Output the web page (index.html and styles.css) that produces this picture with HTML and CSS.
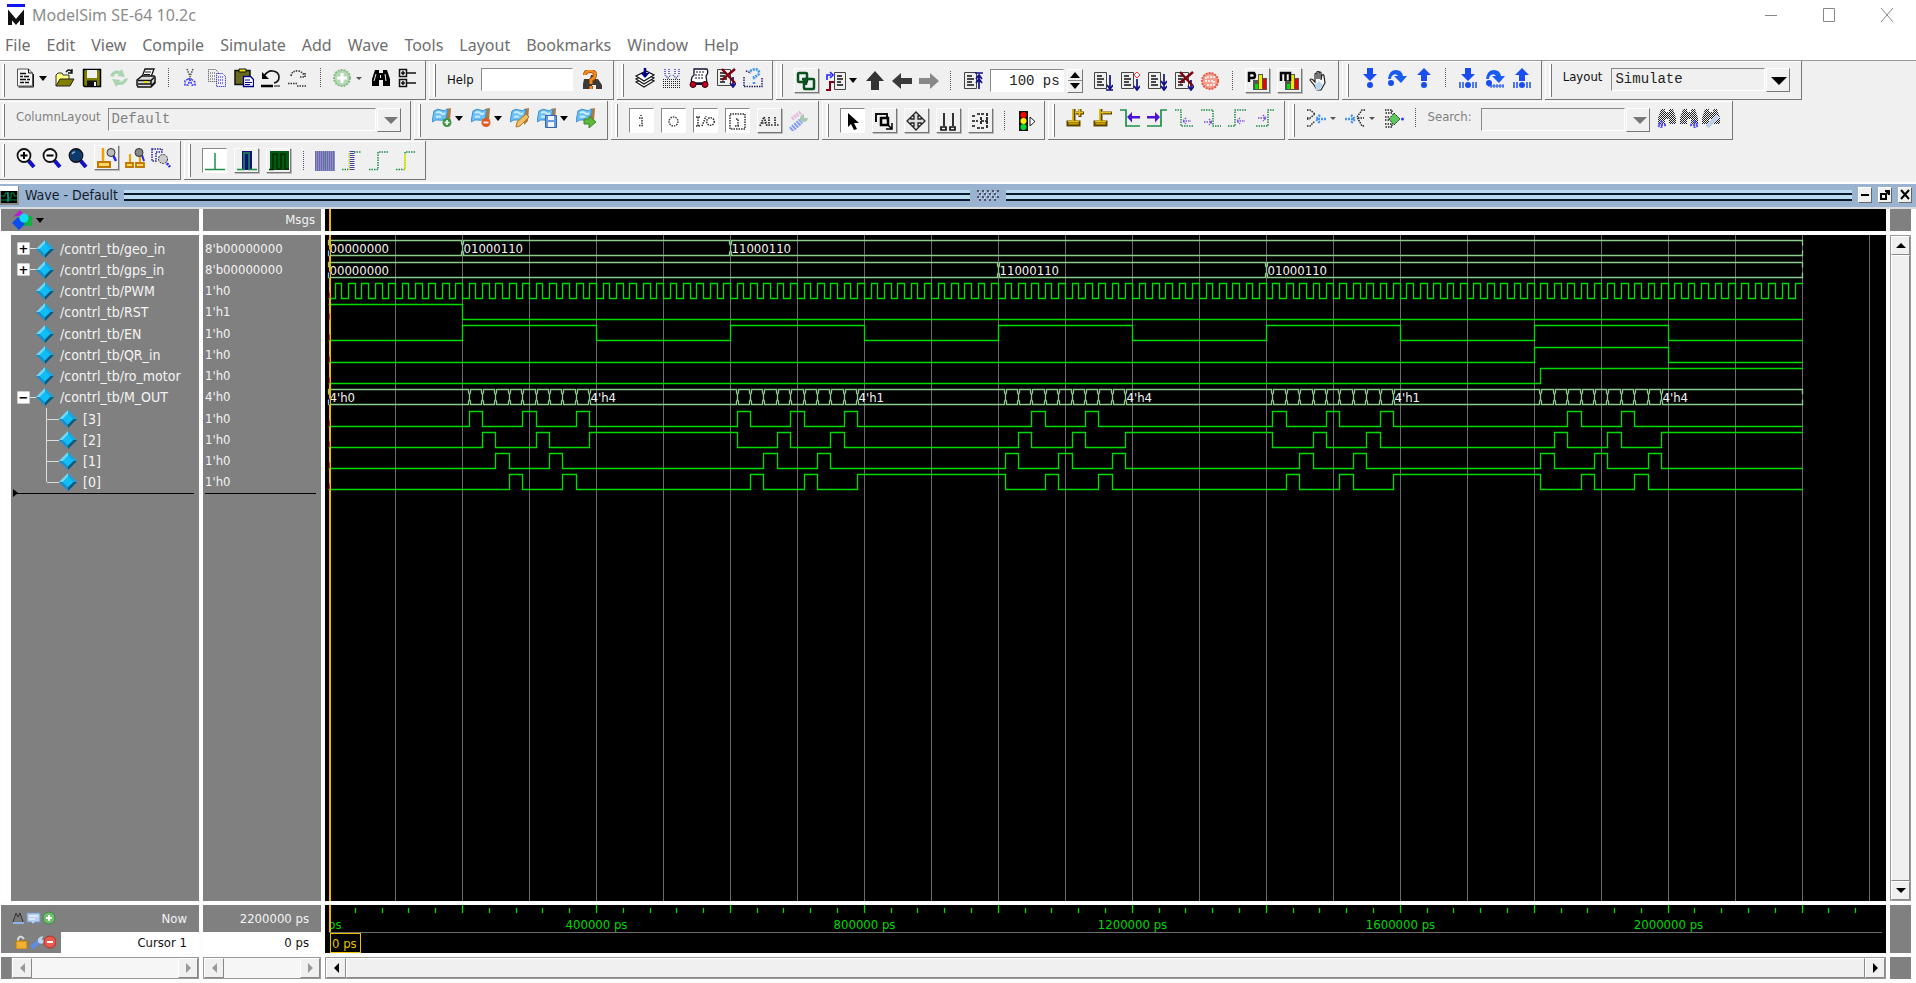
FILE: index.html
```html
<!DOCTYPE html>
<html lang="en">
<head>
<meta charset="utf-8">
<title>ModelSim SE-64 10.2c</title>
<link rel="stylesheet" href="styles.css">
</head>
<body>
<svg class="sprite" aria-hidden="true">
  <symbol id="i-doc" viewBox="0 0 20 20"><path d="M1.500 1h11l4 4v13h-15z" fill="#f4f4f4" stroke="#555"/><path d="M12.500 1v4h4M17.500 6v13h-15" fill="none" stroke="#111"/><path d="M4 5.500h6M4 8.500h3M8 8.500h5M4 11.500h6M11 11.500h3M4 14.500h4M9 14.500h4" stroke="#111" stroke-width="1.500"/></symbol>
  <symbol id="i-open" viewBox="0 0 20 20"><path d="M1 18V7l2-2h4l1 2h6v4" fill="#ffff80" stroke="#333"/><path d="M1 18l4-7h14l-4 7z" fill="#808000" stroke="#222"/><path d="M11 4q3-4 6 0M17 1v4h-4" fill="none" stroke="#111" stroke-width="1.400"/></symbol>
  <symbol id="i-save" viewBox="0 0 20 20"><path d="M1.500 1.500h17v17h-16l-1-1z" fill="#808000" stroke="#000" stroke-width="1.500"/><path d="M5 2h10v8H5z" fill="#f0f0f0"/><path d="M5 12.500h10V18H5z" fill="#111"/><path d="M12 14h2v4h-2z" fill="#eee"/></symbol>
  <symbol id="i-refresh" viewBox="0 0 20 20"><g fill="#a9d6b0"><path d="M1 8q3-7 10-5l2-2 3 8-8-1 2-2q-5-1-5 3z"/><path d="M19 10q-2 8-10 7l-2 2-4-8 9 1-2 2q4 0 5-3z"/></g></symbol>
  <symbol id="i-print" viewBox="0 0 20 20"><path d="M6 9l3-8h9l-3 8z" fill="#fff" stroke="#111" stroke-width="1.300"/><path d="M9 4h6M8 6.500h6" stroke="#111"/><path d="M1 12l5-4h12l1 1v6l-4 4H2l-1-2z" fill="#ddd" stroke="#111" stroke-width="1.500"/><path d="M2 12.500h13l3-3M2 16h13v-3M15 18l4-4" fill="none" stroke="#111" stroke-width="1.500"/><path d="M8 14h4" stroke="#e8e000" stroke-width="2"/></symbol>
  <symbol id="i-cut" viewBox="0 0 20 20"><path d="M7 1l4 10M13 1l-4 10" stroke="#555" stroke-width="1.500" stroke-dasharray="1.500 1" fill="none"/><path d="M8 11l-3 2v4h3l2-5 2 5h3v-3l-4-3z" fill="none" stroke="#33f" stroke-width="1.500" stroke-dasharray="2 1"/></symbol>
  <symbol id="i-copy" viewBox="0 0 20 20"><path d="M1.500 1.500h7l3 3v9h-10zM3 5h5M3 8h5M3 11h5" fill="none" stroke="#444" stroke-dasharray="1 1"/><path d="M9.500 5.500h6l3 3v10h-9z" fill="#eef" stroke="#119" stroke-dasharray="1 1"/><path d="M11 9h6M11 12h6M11 15h6" stroke="#119" stroke-dasharray="1 1"/></symbol>
  <symbol id="i-paste" viewBox="0 0 20 20"><path d="M1 2.500h15v14H1z" fill="#6b6a1c" stroke="#111" stroke-width="1.500"/><path d="M5 1h7v3H5z" fill="#e8e000" stroke="#111"/><path d="M9.500 8.500h7l3 3v7h-10z" fill="#fff" stroke="#008" stroke-width="1.300"/><path d="M11 12h5M11 14.500h7M11 16.500h5" stroke="#008"/></symbol>
  <symbol id="i-undo" viewBox="0 0 20 20"><path d="M3 8q4-6 9-5 6 1 6 6 0 5-5 6" fill="none" stroke="#111" stroke-width="1.600"/><path d="M1 4v7h7z"/><path d="M0 18h12" stroke="#000" stroke-width="2.500"/><path d="M13 18h6" stroke="#111"/></symbol>
  <symbol id="i-redo" viewBox="0 0 20 20"><path d="M3 8q1-6 8-5 3 1 5 4M12 9h5V4" fill="none" stroke="#333" stroke-width="1.600" stroke-dasharray="1.500 1"/><path d="M0 15.500h10M9 18h10" stroke="#333" stroke-width="1.500" stroke-dasharray="1.500 1"/></symbol>
  <symbol id="i-add" viewBox="0 0 20 20"><circle cx="10" cy="10" r="8" fill="#b4dab4" stroke="#8ab68a" stroke-width="2" stroke-dasharray="2 1"/><path d="M10 5v10M5 10h10" stroke="#fff" stroke-width="3"/></symbol>
  <symbol id="i-binoc" viewBox="0 0 20 20"><path d="M4 2h4v3h4V2h4l3 9v7h-7v-6H8v6H1v-7z"/><path d="M5 6l-2 7M14 6l1 7M9.500 7v3" stroke="#eee" stroke-width="1"/></symbol>
  <symbol id="i-tree" viewBox="0 0 20 20"><g fill="none" stroke="#111" stroke-width="1.500"><path d="M1.500 1.500h7v7h-7zM1.500 11.500h7v7h-7zM9 5h9M9 15h9M3 5h4M5 3v4M3 15h4M5 13v4"/></g></symbol>
  <symbol id="i-helpfind" viewBox="0 0 20 20"><path d="M2 9h6l1-4h3l1 4h3l4 6v4h-6v-4h-4v4H1v-5z" fill="#3a3a3a"/><path d="M3 5q0-4 5-4 5 0 5 4 0 3-4 5v4M9 16v3" fill="none" stroke="#a04800" stroke-width="4"/><path d="M3 5q0-4 5-4 5 0 5 4 0 3-4 5v4M9 16v3" fill="none" stroke="#f58a1c" stroke-width="2.500"/></symbol>
  <symbol id="i-layers" viewBox="0 0 20 20"><g fill="#fff" stroke="#111" stroke-width="1.200"><path d="M1 14l10-5 8 4-10 6z"/><path d="M1 11l10-5 8 4-10 6z"/><path d="M1 8l10-5 8 4-10 6z"/></g><path d="M10 0v6" stroke="#008" stroke-width="2.500"/><path d="M5.500 5h9L10 10z" fill="#008"/></symbol>
  <symbol id="i-compall" viewBox="0 0 20 20"><path d="M3 1v5M7 1v5M13 1v5M17 1v5M3 7l3 3 3-3M11 7l3 3 3-3" fill="none" stroke="#44b" stroke-width="1.500" stroke-dasharray="1 1"/><path d="M1 11.500h18M1 13.500h18M1 15.500h18M1 17.500h18M1 19.500h18" stroke="#222" stroke-dasharray="1 1"/></symbol>
  <symbol id="i-sim" viewBox="0 0 20 20"><path d="M5 1h13q2 4-1 7l1 7H3q-2-5 2-8z" fill="#fff" stroke="#113" stroke-width="1.300"/><path d="M7 4h9M6 7h9M6 10h9" stroke="#113" stroke-dasharray="2 1"/><circle cx="4" cy="16.500" r="3" fill="#c00020" stroke="#300"/><circle cx="16" cy="16.500" r="3" fill="#c00020" stroke="#300"/><path d="M7 16h6" stroke="#113" stroke-width="2"/></symbol>
  <symbol id="i-break" viewBox="0 0 20 20"><path d="M1.500 1.500h13v16h-13z" fill="#eee" stroke="#444"/><path d="M4 5h6M4 8h5M4 11h7M4 14h5" stroke="#111" stroke-width="1.600"/><path d="M17 9v9M14 15l3 4 3-4" fill="none" stroke="#118" stroke-width="1.700"/><path d="M6 1l13 14M19 1L6 12" stroke="#7c0010" stroke-width="2.400"/></symbol>
  <symbol id="i-ask" viewBox="0 0 20 20"><path d="M1 18.500h18V9M1 18V8M3 3l5 2" fill="none" stroke="#226" stroke-width="1.500" stroke-dasharray="1.500 1"/><path d="M7 3q7-4 9 1 1 3-5 5v3M11 14v2" fill="none" stroke="#3b95e8" stroke-width="2.500" stroke-dasharray="2 1"/></symbol>
  <symbol id="i-link" viewBox="0 0 20 20"><g fill="none" stroke="#0a5020" stroke-width="2.500"><rect x="2" y="2" width="9" height="9" rx="1"/><rect x="8" y="8" width="10" height="10" rx="1"/><path d="M6 8h4v6"/></g></symbol>
  <symbol id="i-restart" viewBox="0 0 20 20"><path d="M8.500 1.500h11v17h-11z" fill="#eee" stroke="#444"/><path d="M11 5h5M11 8h6M11 11h4M11 14h6" stroke="#111" stroke-width="1.500"/><path d="M1 9V4h4M4 1l3 3-3 3" fill="none" stroke="#22f" stroke-width="1.600"/><path d="M0 19h4v-8h4" fill="none" stroke="#8b0010" stroke-width="2"/></symbol>
  <symbol id="i-up" viewBox="0 0 20 20"><path d="M10 0l9 10h-5v9H6v-9H1z" fill="#333"/></symbol>
  <symbol id="i-left" viewBox="0 0 20 20"><path d="M0 10l9-8v5h11v6H9v5z" fill="#3a3a3a"/></symbol>
  <symbol id="i-right" viewBox="0 0 20 20"><path d="M20 10l-9-8v5H0v6h11v5z" fill="#888"/></symbol>
  <symbol id="i-step" viewBox="0 0 20 20"><path d="M1.500 1.500h12v16h-12z" fill="#eee" stroke="#444"/><path d="M4 5h5M4 8h7M4 11h5M4 14h7" stroke="#111" stroke-width="1.500"/></symbol>
  <symbol id="i-runlen" viewBox="0 0 20 20"><use href="#i-step"/><path d="M12 2h8M16 18V4M13 8l3-4 3 4M13 12l3-4 3 4" fill="none" stroke="#118" stroke-width="1.700"/></symbol>
  <symbol id="i-run" viewBox="0 0 20 20"><use href="#i-step"/><path d="M17 4v13M14 14l3 4 3-4M13 19h7" fill="none" stroke="#118" stroke-width="1.700"/></symbol>
  <symbol id="i-cont" viewBox="0 0 20 20"><use href="#i-step"/><path d="M17 8v10M14 15l3 4 3-4" fill="none" stroke="#118" stroke-width="1.700"/><path d="M17 1l3 3-3 3-3-3z" fill="#fff" stroke="#f33"/></symbol>
  <symbol id="i-runall" viewBox="0 0 20 20"><use href="#i-step"/><path d="M17 3v15M14 10l3 4 3-4M14 15l3 4 3-4" fill="none" stroke="#118" stroke-width="1.700"/></symbol>
  <symbol id="i-stop" viewBox="0 0 20 20"><circle cx="9" cy="10" r="8" fill="#f2a091" stroke="#e85640" stroke-width="2" stroke-dasharray="2 1"/><path d="M6 6h8M5 6v4h8v4H5" fill="none" stroke="#fff" stroke-dasharray="2 1" stroke-width="1.500"/></symbol>
  <symbol id="i-bars" viewBox="0 0 20 20"><path d="M6 9h5V3h5v4h4v12H6z" fill="#555"/><path d="M8 13h3v5H8z" fill="#0d0"/><path d="M12 4h3v14h-3z" fill="#ee0"/><path d="M16 8h3v10h-3z" fill="#e00"/></symbol>
  <symbol id="i-prof" viewBox="0 0 20 20"><use href="#i-bars"/><path d="M2 11V2h5q2 3 0 5H3" fill="none" stroke="#000" stroke-width="2.500"/></symbol>
  <symbol id="i-mem" viewBox="0 0 20 20"><use href="#i-bars"/><path d="M2 10V2h9v8M6.500 2v8" fill="none" stroke="#000" stroke-width="2.500"/></symbol>
  <symbol id="i-hand" viewBox="0 0 20 20"><path d="M5 14L1 9q1-2 3 0l2 2V3q2-2 2 0v5-7q2-2 2 0v7-6q2-2 2 0v7l1-5q2-1 2 1l1 7-4 7H8z" fill="#f8f8f8" stroke="#222" stroke-width="1.200"/><path d="M6 14l4-4 4 4-4 5H7z" fill="#bcd6f0"/></symbol>
  <symbol id="i-into" viewBox="0 0 20 20"><path d="M7 0h6v6h4l-7 7-7-7h4z" fill="#1a4df0"/><circle cx="10" cy="17" r="3" fill="#1a4df0"/></symbol>
  <symbol id="i-over" viewBox="0 0 20 20"><path d="M1 11q1-9 8-9 6 0 7 6h4l-6 7-7-7h4q-2-3-5-1-2 1-2 4z" fill="#1a5cf0"/><circle cx="4" cy="15" r="3" fill="#1a4df0"/></symbol>
  <symbol id="i-out" viewBox="0 0 20 20"><path d="M7 13h6V7h4l-7-7-7 7h4z" fill="#1a4df0"/><circle cx="10" cy="17" r="3" fill="#1a4df0"/></symbol>
  <symbol id="i-ticks" viewBox="0 0 20 20"><path d="M2 14v6M5 14v6M15 14v6M18 14v6" stroke="#1a4df0" stroke-width="1.500"/></symbol>
  <symbol id="i-intoc" viewBox="0 0 20 20"><use href="#i-ticks"/><use href="#i-into"/></symbol>
  <symbol id="i-overc" viewBox="0 0 20 20"><path d="M3 18h16M6 16v4M9 16v4M12 16v4M15 16v4M18 16v4" stroke="#1a4df0"/><use href="#i-over"/></symbol>
  <symbol id="i-outc" viewBox="0 0 20 20"><use href="#i-ticks"/><use href="#i-out"/></symbol>
  <symbol id="i-flag" viewBox="0 0 20 20"><path d="M14 1l5-1-1 13-4 4z" fill="#b07a3c"/><path d="M2 3q4-3 7-1t7-1l-2 10q-4 2-7 1t-7 2z" fill="#6cc0f6" stroke="#3a8ed0"/><path d="M4 5q3-2 5 0t4 0M4 9q3-1 5 0" stroke="#c8ecff" stroke-width="2" fill="none"/></symbol>
  <symbol id="i-flagadd" viewBox="0 0 20 20"><use href="#i-flag"/><circle cx="15" cy="14.500" r="4.500" fill="#3f9440"/><path d="M15 12v5M12.500 14.500h5" stroke="#fff" stroke-width="1.600"/></symbol>
  <symbol id="i-flagdel" viewBox="0 0 20 20"><use href="#i-flag"/><circle cx="15" cy="14.500" r="4.500" fill="#e2581e"/><path d="M12.500 14.500h5" stroke="#fff" stroke-width="1.800"/></symbol>
  <symbol id="i-flagedit" viewBox="0 0 20 20"><use href="#i-flag"/><path d="M6 19l1-5 9-8 3 3-9 9z" fill="#f0c060" stroke="#a97a28"/></symbol>
  <symbol id="i-flagsave" viewBox="0 0 20 20"><use href="#i-flag"/><path d="M8.500 7.500h11v12h-11z" fill="#6a9ae0" stroke="#3562b0"/><path d="M11 8h6v4h-6zM11 14h6v5h-6z" fill="#eef5ff"/></symbol>
  <symbol id="i-flaggo" viewBox="0 0 20 20"><use href="#i-flag"/><path d="M8 11h5V8l7 6-7 6v-4H8z" fill="#5fb83c" stroke="#3c8a22"/></symbol>
  <symbol id="i-in" viewBox="0 0 20 20"><path d="M8 7h3v7M8 14.500h5M10 4v1" fill="none" stroke="#333" stroke-width="1.500" stroke-dasharray="1.500 1"/></symbol>
  <symbol id="i-o" viewBox="0 0 20 20"><circle cx="10.500" cy="10.500" r="4.500" fill="none" stroke="#444" stroke-width="1.500" stroke-dasharray="1.500 1"/></symbol>
  <symbol id="i-io" viewBox="0 0 20 20"><path d="M1 6h4M3 6v9M1 15h4M7 15l4-10" fill="none" stroke="#333" stroke-width="1.500" stroke-dasharray="1.500 1"/><circle cx="15.500" cy="10.500" r="3.800" fill="none" stroke="#333" stroke-width="1.500" stroke-dasharray="1.500 1"/></symbol>
  <symbol id="i-int" viewBox="0 0 20 20"><path d="M3 3h15v15H3zM9 8h2v7M8 15h5" fill="none" stroke="#333" stroke-width="1.500" stroke-dasharray="1.500 1"/></symbol>
  <symbol id="i-all" viewBox="0 0 20 20"><path d="M1 15l4-9 3 9M3 12h4M10 6v8h4M16 6v8h4" fill="none" stroke="#222" stroke-width="1.700" stroke-dasharray="1.500 1"/></symbol>
  <symbol id="i-wrench" viewBox="0 0 20 20"><path d="M2 19l10-9" stroke="#7f9cf0" stroke-width="6" stroke-dasharray="2 1"/><path d="M11 10q-1-6 4-7v4h4q-1 6-8 3" fill="#a8c8b4"/><path d="M3 8l9-7" stroke="#e3b8d8" stroke-width="4" stroke-dasharray="2 1"/></symbol>
  <symbol id="i-pointer" viewBox="0 0 20 20"><path d="M6 2v14l3-3 3 6 3-1-3-6h5z"/></symbol>
  <symbol id="i-zoommode" viewBox="0 0 20 20"><path d="M2 11V3h11v3" fill="none" stroke="#111" stroke-width="2"/><rect x="7" y="7" width="7" height="7" fill="none" stroke="#000" stroke-width="2.500"/><path d="M13 13l5 5M18 12v6h-6" fill="none" stroke="#000" stroke-width="1.500"/></symbol>
  <symbol id="i-pan" viewBox="0 0 20 20"><path d="M10 1l4 4h-2v3h3V6l4 4-4 4v-2h-3v3h2l-4 4-4-4h2v-3H5v2l-4-4 4-4v2h3V5H6z" fill="#ddd" stroke="#222" stroke-width="1.300"/></symbol>
  <symbol id="i-twocur" viewBox="0 0 20 20"><path d="M6 2v13M15 2v13M3 16h5v3H3zM12 16h5v3h-5z" fill="none" stroke="#111" stroke-width="1.700"/></symbol>
  <symbol id="i-edit" viewBox="0 0 20 20"><path d="M7 3h7M7 17h7M17 2v16M2 5h3M2 10h6M2 15h3M11 10h7M11 6v8" fill="none" stroke="#111" stroke-width="1.700" stroke-dasharray="3 1"/></symbol>
  <symbol id="i-traffic" viewBox="0 0 20 20"><path d="M2 0h9v20H2z" fill="#111"/><circle cx="6.500" cy="4" r="3" fill="#f00"/><circle cx="6.500" cy="10" r="3" fill="#fe0"/><circle cx="6.500" cy="16" r="3" fill="#0d3"/><path d="M13 6v9l5-4.500z" fill="#fff" stroke="#222"/></symbol>
  <symbol id="i-curadd" viewBox="0 0 20 20"><path d="M8 1v12M10 5h8M14 1v8" stroke="#5c4500" stroke-width="3"/><path d="M1.500 13.500h12v4h-12z" fill="#c8a000" stroke="#5c4500" stroke-width="2"/><path d="M7 1v12M9 4.500h8M13.500 1v7M2 13.500h11" stroke="#e8c010" stroke-width="1.600"/></symbol>
  <symbol id="i-curdel" viewBox="0 0 20 20"><path d="M8 1v12M10 5h9" stroke="#5c4500" stroke-width="3"/><path d="M1.500 13.500h12v4h-12z" fill="#c8a000" stroke="#5c4500" stroke-width="2"/><path d="M7 1v12M8 4.500h10M2 13.500h11" stroke="#e8c010" stroke-width="1.600"/></symbol>
  <symbol id="i-prevt" viewBox="0 0 20 20"><path d="M0 2h6v16h14" fill="none" stroke="#1f9048" stroke-width="1.700"/><path d="M7 9l5-5v4h8v2.500h-8v4z" fill="#4a12d8"/></symbol>
  <symbol id="i-nextt" viewBox="0 0 20 20"><path d="M20 2h-6v16H0" fill="none" stroke="#1f9048" stroke-width="1.700"/><path d="M13 9L8 4v4H0v2.500h8v4z" fill="#4a12d8"/></symbol>
  <symbol id="i-fall" viewBox="0 0 20 20"><path d="M1 2h6v16h13" fill="none" stroke="#1f9048" stroke-width="1.500" stroke-dasharray="1.500 1"/><path d="M9 13h8M12 10l-3 3 3 3" fill="none" stroke="#7a50e0" stroke-width="1.500" stroke-dasharray="1.500 1"/></symbol>
  <symbol id="i-rise" viewBox="0 0 20 20"><path d="M0 18h7V2h12" fill="none" stroke="#1f9048" stroke-width="1.500" stroke-dasharray="1.500 1"/><path d="M9 13h8M12 10l-3 3 3 3" fill="none" stroke="#7a50e0" stroke-width="1.500" stroke-dasharray="1.500 1"/></symbol>
  <symbol id="i-fall2" viewBox="0 0 20 20"><path d="M0 2h12v16h8" fill="none" stroke="#1f9048" stroke-width="1.500" stroke-dasharray="1.500 1"/><path d="M3 14h8M8 11l3 3-3 3" fill="none" stroke="#7a50e0" stroke-width="1.500" stroke-dasharray="1.500 1"/></symbol>
  <symbol id="i-rise2" viewBox="0 0 20 20"><path d="M1 18h12V2h6" fill="none" stroke="#1f9048" stroke-width="1.500" stroke-dasharray="1.500 1"/><path d="M3 10h8M8 7l3 3-3 3" fill="none" stroke="#7a50e0" stroke-width="1.500" stroke-dasharray="1.500 1"/></symbol>
  <symbol id="i-expl" viewBox="0 0 20 20"><path d="M1 2h3l5 4M1 10h3l5-4M1 11h3M1 18h3l5-5" fill="none" stroke="#222" stroke-width="1.500" stroke-dasharray="1.500 1"/><path d="M20 11h-9M14 7l-4 4 4 4" fill="none" stroke="#4a94f0" stroke-width="2.500" stroke-dasharray="2 1"/></symbol>
  <symbol id="i-expr" viewBox="0 0 20 20"><path d="M20 2h-3l-5 7 5 9h3M13 10h6" fill="none" stroke="#222" stroke-width="1.500" stroke-dasharray="1.500 1"/><path d="M0 11h9M6 7l4 4-4 4" fill="none" stroke="#4a94f0" stroke-width="2.500" stroke-dasharray="2 1"/></symbol>
  <symbol id="i-exps" viewBox="0 0 20 20"><path d="M1 2h7v3H1M1 9h5M1 12h5M1 16h7v3H1" fill="none" stroke="#222" stroke-width="1.500" stroke-dasharray="1.500 1"/><path d="M10 5l6 6-6 6-5-6z" fill="#5ac85a" stroke="#222" stroke-dasharray="2 1"/><circle cx="18.500" cy="11" r="1.500" fill="#33f"/></symbol>
  <pattern id="dither" width="2" height="2" patternUnits="userSpaceOnUse"><path d="M0 0h1v1H0zM1 1h1v1H1z" fill="#222"/></pattern>
  <symbol id="i-binocd" viewBox="0 0 20 20"><path d="M4 1h4v3h4V1h4l3 9v6h-7v-5H8v5H1v-6z" fill="url(#dither)"/></symbol>
  <symbol id="i-binocl" viewBox="0 0 20 20"><use href="#i-binocd"/><path d="M9 17H2M5 13l-4 4 4 3" fill="none" stroke="#55f" stroke-width="2.500" stroke-dasharray="2 1"/></symbol>
  <symbol id="i-binocr" viewBox="0 0 20 20"><use href="#i-binocd"/><path d="M11 17h7M15 13l4 4-4 3" fill="none" stroke="#55f" stroke-width="2.500" stroke-dasharray="2 1"/></symbol>
  <symbol id="i-binocw" viewBox="0 0 20 20"><use href="#i-binocd"/><path d="M6 19l11-11" stroke="#bcd0ec" stroke-width="4"/></symbol>
  <symbol id="i-mag" viewBox="0 0 20 20"><path d="M12 12l6 7" stroke="#1212c8" stroke-width="4"/><circle cx="8" cy="7.500" r="6.500" fill="#fafafa" stroke="#111" stroke-width="1.800"/></symbol>
  <symbol id="i-zin" viewBox="0 0 20 20"><use href="#i-mag"/><path d="M8 4v7M4.500 7.500h7" stroke="#000" stroke-width="2"/></symbol>
  <symbol id="i-zout" viewBox="0 0 20 20"><use href="#i-mag"/><path d="M4.500 7.500h7" stroke="#000" stroke-width="2"/></symbol>
  <symbol id="i-zfull" viewBox="0 0 20 20"><use href="#i-mag"/><circle cx="8" cy="7.500" r="6" fill="#0c3a6c"/><path d="M4 6q1-2 3-2" fill="none" stroke="#7ab0e0" stroke-width="1.500"/></symbol>
  <symbol id="i-zcur" viewBox="0 0 20 20"><path d="M6 0v14" stroke="#f0a000" stroke-width="2.500"/><path d="M1 14h12v5H1z" fill="#ffd860" stroke="#c07800" stroke-width="2"/><path d="M16 7l3 6" stroke="#22f" stroke-width="2.500"/><circle cx="14" cy="4.500" r="4" fill="#bbb" stroke="#333"/></symbol>
  <symbol id="i-zcur2" viewBox="0 0 20 20"><path d="M5 6v9M15 5v9" stroke="#f0a000" stroke-width="2.200"/><path d="M1 15h7v4H1zM11 15h8v4h-8z" fill="#ffd860" stroke="#c07800" stroke-width="1.800"/><path d="M17 7l2 6" stroke="#22f" stroke-width="2"/><circle cx="14" cy="4.500" r="4" fill="#888" stroke="#333"/></symbol>
  <symbol id="i-zarea" viewBox="0 0 20 20"><path d="M1 1h10v3h-6v9H1z" fill="none" stroke="#22a" stroke-width="1.500" stroke-dasharray="1.500 1"/><path d="M14 13l5 6" stroke="#22f" stroke-width="2.500" stroke-dasharray="2 1"/><circle cx="12" cy="11" r="4.500" fill="#ccc" stroke="#333" stroke-dasharray="2 1"/></symbol>
  <symbol id="i-w1" viewBox="0 0 20 20"><path d="M0 18.500h20M10 2v16" stroke="#1f9048" stroke-width="1.500"/></symbol>
  <symbol id="i-w2" viewBox="0 0 20 20"><path d="M5 0h10v19H5z" fill="#10107c"/><path d="M0 18.500h7V2h5v16.500h8" fill="none" stroke="#1f9048" stroke-width="1.500"/></symbol>
  <symbol id="i-w3" viewBox="0 0 20 20"><path d="M1 0h19v19H1z" fill="#005c10"/><path d="M0 18.500h4V3h4v15h4V3h4v15h4" fill="none" stroke="#002a00" stroke-width="1.500"/></symbol>
  <symbol id="i-w4" viewBox="0 0 20 20"><path d="M0 0h20v20H0z" fill="#8f8fc4"/><path d="M0 1h20M0 3h20M0 5h20M0 7h20M0 9h20M0 11h20M0 13h20M0 15h20M0 17h20M0 19h20" stroke="#44449c" stroke-dasharray="1 1"/><path d="M10 2v18" stroke="#1f9048" stroke-dasharray="1 1"/></symbol>
  <symbol id="i-w5" viewBox="0 0 20 20"><path d="M0 18.500h7M12 1h7" fill="none" stroke="#1f9048" stroke-width="1.500" stroke-dasharray="1.500 1"/><path d="M10 0v20" stroke="#44449c" stroke-width="5" stroke-dasharray="1 1"/><path d="M7 2v17" stroke="#dd4" stroke-width="1.500" stroke-dasharray="2 1"/></symbol>
  <symbol id="i-w6" viewBox="0 0 20 20"><path d="M0 18.500h9V1h10" fill="none" stroke="#1f9048" stroke-width="1.500" stroke-dasharray="1.500 1"/></symbol>
  <symbol id="i-w7" viewBox="0 0 20 20"><use href="#i-w6"/><path d="M9 3v16" stroke="#ee0" stroke-width="1.500"/></symbol>
  <symbol id="i-dia" viewBox="0 0 20 20"><path d="M10 0L0 10h10z" fill="#6fd8f6"/><path d="M10 0l10 10H10z" fill="#1aa6dc"/><path d="M0 10l10 10V10z" fill="#1590cc"/><path d="M20 10L10 20V10z" fill="#08587e"/><path d="M10 4l6 6-6 6-6-6z" fill="#10bdf4"/></symbol>
</svg>

<header class="titlebar">
  <svg class="logo" viewBox="0 0 18 22" aria-hidden="true"><path d="M0 0h18v3H0z" fill="#1414f0"/><path d="M3 21V11l6 7 6-7v10" fill="none" stroke="#111" stroke-width="4"/></svg>
  <h1 class="title">ModelSim SE-64 10.2c</h1>
  <div class="wincontrols">
    <button class="winbtn" aria-label="Minimize"><svg viewBox="0 0 12 14"><path d="M0 7.500h12"/></svg></button>
    <button class="winbtn" aria-label="Maximize"><svg viewBox="0 0 12 14"><path d="M.5.5h11v13H.5z"/></svg></button>
    <button class="winbtn" aria-label="Close"><svg viewBox="0 0 12 14"><path d="M0 0l12 14M12 0L0 14"/></svg></button>
  </div>
</header>
<nav class="menubar">
  <button>File</button><button>Edit</button><button>View</button><button>Compile</button><button>Simulate</button><button>Add</button><button>Wave</button><button>Tools</button><button>Layout</button><button>Bookmarks</button><button>Window</button><button>Help</button>
</nav>

<section class="toolbars">
  <div class="bar">
    <div class="group narrow"><div class="tools" data-icons="doc ^ open save refresh print | cut copy paste undo redo | add v binoc tree"></div></div>
    <div class="group wide"><div class="tools"><label for="help">Help</label><input id="help" class="field help" type="text"><button class="tool" aria-label="Search help"><svg><use href="#i-helpfind"/></svg></button></div></div>
    <div class="group"><div class="tools" data-icons="layers compall sim break ask"></div></div>
    <div class="group">
      <div class="tools" data-icons="+link restart ^ up left right | runlen"></div>
      <div class="tools"><input class="field time" type="text" value="100 ps" aria-label="Run length"><span class="spin"><button aria-label="Increase"></button><button class="down" aria-label="Decrease"></button></span></div>
      <div class="tools" data-icons="run cont runall break stop | +prof +mem hand"></div>
    </div>
    <div class="group"><div class="tools" data-icons="into over out | intoc overc outc"></div></div>
    <div class="group wide"><div class="tools top"><label for="layout">Layout</label><span class="combo layout"><select id="layout" class="field"><option>Simulate</option></select></span></div></div>
  </div>
  <div class="bar">
    <div class="group"><div class="tools top dim"><label for="cols">ColumnLayout</label><span class="combo cols"><select id="cols" class="field"><option>Default</option></select></span></div></div>
    <div class="group wide"><div class="tools" data-icons="flagadd ^ flagdel ^ flagedit flagsave ^ flaggo"></div></div>
    <div class="group"><div class="tools" data-icons="-in -o -io -int +all wrench"></div></div>
    <div class="group narrow"><div class="tools" data-icons="-pointer +zoommode +pan +twocur +edit | traffic"></div></div>
    <div class="group"><div class="tools" data-icons="curadd curdel prevt nextt fall fall2 rise rise2"></div></div>
    <div class="group wide">
      <div class="tools" data-icons="expl v expr v exps |"></div>
      <div class="tools top dim"><label for="find">Search:</label><span class="combo find"><input id="find" class="field" type="text"></span></div>
      <div class="tools tight" data-icons="binocl binocr binocw"></div>
    </div>
  </div>
  <div class="bar">
    <div class="group snug"><div class="tools" data-icons="zin zout zfull +zcur zcur2 zarea"></div></div>
    <div class="group"><div class="tools" data-icons="-w1 +w2 +w3 | w4 w5 w6 w7"></div></div>
  </div>
</section>

<div class="panetitle">
  <svg class="paneicon" viewBox="0 0 19 19" aria-hidden="true"><path d="M0 0h19v19H0z" fill="#888"/><path d="M0 0h18v5H0z" fill="#fff"/><path d="M1 5h16v12H1z" fill="#000"/><path d="M1 10h4V7h3v5h3V7h3v3h3M1 14h16" fill="none" stroke="#0b8a3a"/><path d="M8 6v10" stroke="#0cc"/></svg>
  <h2>Wave - Default</h2>
  <span class="rails"></span>
  <svg class="grip" viewBox="0 0 24 11" aria-hidden="true"><path d="M1 1h22M3 4h20M1 7h22M3 10h20" stroke="#334" stroke-width="1.500" stroke-dasharray="2 3"/><path d="M3 2h20M5 5h18M3 8h20" stroke="#fff" stroke-dasharray="1 4"/></svg>
  <span class="rails"></span>
  <button class="panebtn" aria-label="Minimize pane"><svg viewBox="0 0 12 12"><path d="M2 6h8"/></svg></button>
  <button class="panebtn" aria-label="Undock pane"><svg viewBox="0 0 12 12"><path d="M2 5h5v5H2zM6 6l4-4M6 2h4v4"/></svg></button>
  <button class="panebtn" aria-label="Close pane"><svg viewBox="0 0 12 12"><path d="M2 1l8 9M10 1L2 10"/></svg></button>
</div>

<main class="wave">
  <div class="cell head"><svg class="objects" viewBox="0 0 20 20" aria-hidden="true"><path d="M1 7l7-7 5 6H4z" fill="#c018d8"/><path d="M13 6h7v10h-9z" fill="#14b040"/><path d="M0 13l6-6 7 7-6 6z" fill="#0a4cf0"/><circle cx="12" cy="8" r="4.500" fill="#10dcf8"/></svg><span class="caret"></span></div>
  <div class="cell head msgs">Msgs</div>
  <div class="cell black headplot"><i class="headcursor"></i></div>
  <div class="cell"></div>

  <div class="cell names">
    <ul class="rows">
      <li><button class="tog" aria-label="Expand geo_in">+</button><i class="stub"></i><svg class="dia"><use href="#i-dia"/></svg>/contrl_tb/geo_in</li>
      <li><button class="tog" aria-label="Expand gps_in">+</button><i class="stub"></i><svg class="dia"><use href="#i-dia"/></svg>/contrl_tb/gps_in</li>
      <li class="leaf"><svg class="dia"><use href="#i-dia"/></svg>/contrl_tb/PWM</li>
      <li class="leaf"><svg class="dia"><use href="#i-dia"/></svg>/contrl_tb/RST</li>
      <li class="leaf"><svg class="dia"><use href="#i-dia"/></svg>/contrl_tb/EN</li>
      <li class="leaf"><svg class="dia"><use href="#i-dia"/></svg>/contrl_tb/QR_in</li>
      <li class="leaf"><svg class="dia"><use href="#i-dia"/></svg>/contrl_tb/ro_motor</li>
      <li><button class="tog" aria-label="Collapse M_OUT">−</button><i class="stub"></i><svg class="dia"><use href="#i-dia"/></svg>/contrl_tb/M_OUT</li>
      <li class="bit"><i class="branch"></i><svg class="dia"><use href="#i-dia"/></svg>[3]</li>
      <li class="bit"><i class="branch"></i><svg class="dia"><use href="#i-dia"/></svg>[2]</li>
      <li class="bit"><i class="branch"></i><svg class="dia"><use href="#i-dia"/></svg>[1]</li>
      <li class="bit"><i class="branch"></i><svg class="dia"><use href="#i-dia"/></svg>[0]</li>
    </ul>
    <div class="insert arrow"></div>
  </div>
  <div class="cell">
    <ul class="rows values">
      <li>8'b00000000</li><li>8'b00000000</li><li>1'h0</li><li>1'h1</li><li>1'h0</li><li>1'h0</li><li>1'h0</li><li>4'h0</li><li>1'h0</li><li>1'h0</li><li>1'h0</li><li>1'h0</li>
    </ul>
    <div class="insert"></div>
  </div>
  <div class="cell black plot"><svg id="plot" class="canvas"></svg></div>
  <div class="scroll vert on"><button class="sb up" aria-label="Scroll up"></button><span class="thumb"></span><button class="sb dn" aria-label="Scroll down"></button></div>

  <div class="cell foot">
    <div class="now"><svg class="trio" viewBox="0 0 44 14" aria-hidden="true"><path d="M1 11l3-9 2 4 2-4 3 9" fill="#777" stroke="#333"/><path d="M1 12h11" stroke="#8bb4e8" stroke-width="2"/><path d="M15 2h13v9h-5l-2 2-2-2h-4z" fill="#b8d0f0" stroke="#7494c0"/><path d="M17 5h9M17 8h6" stroke="#fff"/><circle cx="37" cy="7" r="6" fill="#6fc06a" stroke="#3c8a40"/><path d="M37 4v6M34 7h6" stroke="#fff" stroke-width="2"/></svg><span>Now</span></div>
    <div class="cur"><svg class="trio" viewBox="0 0 44 14" aria-hidden="true"><path d="M6 6V4q2-5 6 0" fill="none" stroke="#ddd" stroke-width="2"/><path d="M4 6h11v8H4z" fill="#f0b030" stroke="#b87a10"/><path d="M20 13l7-7" stroke="#5a8ee8" stroke-width="4"/><path d="M26 7q-1-5 5-6l-1 4 3 1q-2 4-6 2" fill="#c0d4ee"/><circle cx="38" cy="7" r="6" fill="#e85a50" stroke="#b03020"/><path d="M35 7h6" stroke="#fff" stroke-width="2"/></svg><span class="lit">Cursor 1</span></div>
  </div>
  <div class="cell foot">
    <div class="now"><span>2200000 ps</span></div>
    <div class="cur"><span class="lit">0 ps</span></div>
  </div>
  <div class="cell black plot"><svg id="ruler" class="canvas"></svg></div>
  <div class="cell"></div>

  <div class="cell names-scroll"><div class="scroll"><button class="sb lf" aria-label="Scroll names left"></button><span class="thumb"></span><button class="sb rt" aria-label="Scroll names right"></button></div></div>
  <div class="scroll"><button class="sb lf" aria-label="Scroll values left"></button><span class="thumb"></span><button class="sb rt" aria-label="Scroll values right"></button></div>
  <div class="scroll on"><button class="sb lf" aria-label="Scroll wave left"></button><span class="thumb"></span><button class="sb rt" aria-label="Scroll wave right"></button></div>
  <div class="cell"></div>
</main>
<script src="wave.js"></script>
</body>
</html>
```
FILE: styles.css
```css
* { box-sizing: border-box; }
html, body { margin: 0; height: 100%; }
body {
  display: flex; flex-direction: column; min-height: 100vh; overflow: hidden;
  background: #f0f0f0; color: #111;
  font: 13px/20px "DejaVu Sans Condensed", "DejaVu Sans", sans-serif;
}
button { margin: 0; padding: 0; border: 0; background: none; font: inherit; color: inherit; }
ul { list-style: none; margin: 0; padding: 0; }
svg { display: block; }
.sprite { position: absolute; width: 0; height: 0; }

.titlebar { display: flex; align-items: center; height: 30px; padding-left: 7px; gap: 7px; background: #fff; }
.logo { width: 18px; height: 22px; }
.title { flex: 1; margin: 0; font: 400 16px/30px "Noto Sans", sans-serif; color: #8c8c8c; }
.wincontrols { display: flex; }
.winbtn { width: 58px; height: 30px; display: grid; place-items: center; }
.winbtn svg { width: 12px; height: 14px; fill: none; stroke: #888; }
.menubar { display: flex; gap: 16px; height: 31px; padding-left: 5px; background: #fff; border-bottom: 1px solid #999; }
.menubar button { font: 16px/30px "Noto Sans", sans-serif; color: #6e6e6e; }

.toolbars { padding-bottom: 1px; }
.bar { display: flex; gap: 3px; height: 40px; margin-left: -2px; }
.group {
  position: relative; display: flex; align-items: flex-start; gap: 7px;
  height: 39px; padding: 7px 9px 0 18px;
  border-right: 1px solid #777; border-bottom: 1px solid #777;
  box-shadow: inset 1px 1px #fff;
}
.group::before {
  content: ""; position: absolute; left: 4px; top: 3px; bottom: 2px; width: 2px;
  background: #fff; border-right: 1px solid #777;
}
.group.narrow { padding-right: 7px; }
.group.wide { padding-right: 11px; }
.group.snug { padding-top: 4px; }
.snug .tools { gap: 6px; }
.tools { display: flex; align-items: center; gap: 7px; min-height: 20px; }
.group:has(.boxed) .tools { min-height: 25px; }
.group .tight { gap: 2px; }
.dim { color: #808080; }
.tool { width: 20px; height: 20px; flex: none; }
.tool svg { width: 20px; height: 20px; }
.field + .tool { margin-left: 2px; }
.boxed { width: 25px; height: 25px; display: grid; place-items: center; }
.raised { border: 1px solid; border-color: #fff #777 #777 #fff; box-shadow: 1px 1px #bbb; }
.sunken { background: #fff; border: 1px solid; border-color: #888 #fff #fff #888; }
.sep { width: 10px; height: 20px; background: repeating-linear-gradient(#555 0 1px, transparent 1px 2px) center / 1px 100% no-repeat; }
.caret { width: 10px; height: 20px; margin-left: -5px; flex: none; display: grid; place-items: center; }
.caret::after { content: ""; border: 4px solid transparent; border-top: 5px solid #000; border-bottom: 0; }
.caret.small::after { border-width: 3px; border-top-width: 3px; border-bottom: 0; border-top-color: #555; }

.field {
  height: 23px; padding: 0 3px; border: 1px solid; border-color: #888 #fff #fff #888; border-radius: 0;
  background: #fff; color: #222; font: 14px/21px "Liberation Mono", monospace; outline: 0;
}
.help { width: 92px; }
.time { width: 74px; text-align: right; }
.spin { display: grid; width: 16px; height: 24px; margin: 0 3px 0 -4px; border: 1px solid; border-color: #fff #777 #777 #fff; }
.spin button { display: grid; place-items: center; border-bottom: 1px solid #888; }
.spin button::after { content: ""; border: 5px solid transparent; border-bottom: 6px solid #000; border-top: 0; }
.spin .down { border: 0; }
.spin .down::after { border-bottom: 0; border-top: 6px solid #000; }
.combo { position: relative; display: block; padding-right: 25px; }
.combo .field { width: 100%; appearance: none; background: #f0f0f0; display: block; }
.dim .field { color: #808080; }
.combo::before {
  content: ""; position: absolute; right: 0; top: 0; width: 22px; height: 22px;
  border: 1px solid; border-color: #fff #777 #777 #fff;
}
.combo::after {
  content: ""; position: absolute; right: 3px; top: 9px;
  border: 8px solid transparent; border-top: 8px solid #000; border-bottom: 0;
}
.dim .combo::after { border-top-color: #777; border-width: 7px; border-bottom: 0; }
.layout { width: 179px; }
.cols { width: 293px; }
.find { width: 169px; }
.tools.top label { align-self: flex-start; line-height: 18px; padding-right: 2px; }
.tools.top label[for="cols"] { padding: 0; }

.panetitle {
  display: flex; align-items: center; gap: 6px; height: 27px; padding: 1px 4px 2px 0;
  background: #9ab3d1; border-top: 2px solid #fff; border-bottom: 2px solid #d8dce0;
}
.paneicon { width: 19px; height: 19px; }
.panetitle h2 { margin: 0; font-size: 14px; font-weight: 400; color: #111c2c; }
.rails { flex: 1; height: 11px; background: linear-gradient(#b9dcf0 0 3px, #0c1828 3px 5px, #b9dcf0 5px 9px, #0c1828 9px 11px); }
.grip { width: 24px; height: 11px; }
.panebtn { width: 14px; height: 16px; display: grid; place-items: center; background: #f0f0f0; border: 1px solid; border-color: #fff #666 #666 #fff; }
.panebtn svg { width: 12px; height: 12px; fill: none; stroke: #000; stroke-width: 2; }

.wave {
  flex: 1; display: grid; gap: 4px; padding: 0 5px 4px 1px; background: #fdfdfd;
  grid-template-columns: 198px 118px minmax(0, 1fr) 21px;
  grid-template-rows: 22px minmax(0, 1fr) 48px 22px;
}
.cell { background: #808080; color: #f4f4f4; min-width: 0; }
.black { background: #000; }
.head { display: flex; align-items: center; }
.headplot { display: flex; padding-left: 4px; }
.headcursor { width: 2px; background: #f0b800; }
.objects { width: 20px; height: 20px; margin: 0 8px 0 11px; }
.msgs { justify-content: flex-end; padding-right: 6px; }
.names { border-left: 10px solid #fff; }
.rows { display: grid; grid-template-rows: repeat(12, 1fr); height: 258px; padding: 3px 0 0 6px; }
.rows li { display: flex; align-items: center; white-space: nowrap; line-height: 20px; }
.names .rows { font-size: 14px; }
.rows.values { padding-left: 2px; }
.leaf { padding-left: 19px; }
.tog { width: 13px; height: 13px; background: #fff; color: #000; font-size: 13px; font-weight: 700; line-height: 12px; text-align: center; border: 1px solid #ccc; border-radius: 1px; display: grid; place-items: center; }
.stub { width: 6px; height: 1px; background: #ddd; }
.dia { width: 18px; height: 18px; margin-right: 6px; flex: none; }
.bit { padding-left: 29px; }
.branch { align-self: stretch; position: relative; width: 13px; border-left: 1px solid #ddd; }
.branch::after { content: ""; position: absolute; left: 0; right: 0; top: 50%; border-top: 1px solid #ddd; }
.bit:last-child .branch { align-self: flex-start; height: 50%; }
.bit:last-child .branch::after { top: 100%; }
.insert { height: 1px; margin: 0 5px 0 2px; background: #000; }
.arrow { position: relative; }
.arrow::before { content: ""; position: absolute; left: 0; top: -4px; border: 4px solid transparent; border-left: 5px solid #000; border-right: 0; }

.plot { overflow: hidden; }
.canvas { width: 100%; height: 100%; font-size: 13px; }
.canvas text { fill: #f4f4f4; }
.canvas .grid { stroke: #6c6c6c; }
.canvas .sig { stroke: #00dc00; fill: none; }
.canvas .bus { stroke: #8ccc8c; fill: none; }
.canvas .cursor { stroke: #f0b800; stroke-width: 2; fill: none; }
.canvas .green { fill: #00d800; }
.canvas .gold { fill: #e8c000; }

.foot { display: grid; grid-template-rows: 27px 1fr; }
.foot > div { display: flex; align-items: stretch; justify-content: flex-end; }
.now span { padding-right: 12px; line-height: 27px; }
.trio { width: 44px; height: 14px; margin: 6px auto 0 11px; }
.cur .trio { margin: 3px 5px 0 11px; }
.lit { flex: 1; padding-right: 12px; background: #fff; color: #111; text-align: right; line-height: 21px; }

.names-scroll { padding-left: 10px; }
.scroll { display: flex; height: 22px; background: #f6f6f6; border: 1px solid #999; color: #999; }
.scroll.on { color: #000; }
.thumb { flex: 1; }
.on .thumb { background: #f0f0f0; border: 1px solid; border-color: #fff #888 #888 #fff; }
.sb { width: 20px; flex: none; display: grid; place-items: center; background: #f0f0f0; border: 1px solid; border-color: #fff #888 #888 #fff; }
.sb::after { content: ""; border: 5px solid transparent; }
.lf::after { border-right-color: currentColor; border-left: 0; }
.rt::after { border-left-color: currentColor; border-right: 0; }
.up::after { border-bottom-color: currentColor; border-top: 0; }
.dn::after { border-top-color: currentColor; border-bottom: 0; }
.vert { flex-direction: column; height: auto; }
.vert .sb { width: auto; height: 19px; }
```
FILE: wave.js
```js
// Toolbar markup: "+name" raised, "-name" sunken, "|" separator, "^" and "v" menu carets.
document.querySelectorAll('[data-icons]').forEach(function (el) {
  el.innerHTML = el.dataset.icons.split(' ').map(function (t) {
    if (t === '|') return '<span class="sep"></span>';
    if (t === '^') return '<button class="caret" aria-label="More"></button>';
    if (t === 'v') return '<button class="caret small" aria-label="More"></button>';
    var kind = t[0] === '+' ? ' boxed raised' : t[0] === '-' ? ' boxed sunken' : '';
    var name = t.replace(/^[+-]/, '');
    return '<button class="tool' + kind + '" aria-label="' + name + '"><svg><use href="#i-' + name + '"/></svg></button>';
  }).join('');
});

// Times are in thousands of picoseconds.
var X0 = 3, SCALE = 0.66985, END = 2200, PITCH = 21.27;
function X(t) { return Math.round(X0 + t * SCALE) + 0.5; }
function hi(r) { return Math.floor(5.9 + PITCH * r) + 0.5; }
function lo(r) { return hi(r) + 15; }

function signal(row, start, edges) {
  var v = start, d = 'M' + X(0) + ' ' + (v ? hi(row) : lo(row));
  edges.forEach(function (t) {
    v = !v;
    d += 'H' + X(t) + 'V' + (v ? hi(row) : lo(row));
  });
  return '<path class="sig" stroke-width="1.300" d="' + d + 'H' + X(END) + '"/>';
}
function bus(row, times, labels) {
  var out = '', h = hi(row), l = lo(row);
  times.forEach(function (t, i) {
    var a = X(t), b = X(i + 1 < times.length ? times[i + 1] : END);
    var s = i ? 1 : 0, e = i + 1 < times.length ? 1 : 0;
    out += '<path class="bus" stroke-width="1.300" d="M' + a + ' ' + (h + 5) + 'L' + (a + s) + ' ' + (h + 3) + 'V' + h + 'H' + (b - e) + 'V' + (h + 3) + 'L' + b + ' ' + (h + 5) +
      'M' + a + ' ' + (l - 5) + 'L' + (a + s) + ' ' + (l - 3) + 'V' + l + 'H' + (b - e) + 'V' + (l - 3) + 'L' + b + ' ' + (l - 5);
    if (i) out += 'M' + a + ' ' + (h + 4) + 'V' + (l - 4);
    out += '"/>';
    if (labels[t]) out += '<text x="' + (a + 1) + '" y="' + (l - 3) + '">' + labels[t] + '</text>';
  });
  return out;
}

var s = '', t, i;
for (t = 100; t <= 2300; t += 100) s += '<path class="grid" d="M' + X(t) + ' 0V2000"/>';

s += bus(0, [0, 200, 600], { 0: '00000000', 200: '01000110', 600: '11000110' });
s += bus(1, [0, 1000, 1400], { 0: '00000000', 1000: '11000110', 1400: '01000110' });
var clock = [];
for (t = 10; t < END; t += 10) clock.push(t);
s += signal(2, 0, clock);
s += signal(3, 1, [200]);
s += signal(4, 0, [200, 400, 600, 800, 1000, 1200, 1400, 1600, 1800, 2000]);
s += signal(5, 0, [1800, 2000]);
s += signal(6, 0, [1810]);

var bursts = [
  [210, '8421842184'], [610, '8124812481'], [1010, '2481248124'],
  [1410, '8124812481'], [1810, '2481248124']
];
var times = [0], values = [0], labels = { 0: "4'h0" };
bursts.forEach(function (b) {
  for (i = 0; i < 10; i++) { times.push(b[0] + 20 * i); values.push(+b[1][i]); }
  labels[b[0] + 180] = "4'h" + b[1][9];
});
s += bus(7, times, labels);
[8, 4, 2, 1].forEach(function (bit, k) {
  var edges = [], prev = 0;
  values.forEach(function (v, n) {
    var on = v & bit ? 1 : 0;
    if (on !== prev) edges.push(times[n]);
    prev = on;
  });
  s += signal(8 + k, 0, edges);
});
s += '<path class="cursor" d="M5 0V2000"/>';
for (i = 0; i < 12; i++) {
  s += '<path stroke="' + (i < 2 || i === 7 ? '#2020d0' : '#f02000') + '" d="M4.500 ' + (lo(i) - 6) + 'V' + lo(i) + '"/>';
}
document.getElementById('plot').innerHTML = s;

s = '<path class="grid" d="M4 27.500H1557"/>';
for (t = 40; t <= 2280; t += 40) s += '<path class="sig" stroke-width="1.300" d="M' + X(t) + (t % 200 ? ' 3V8' : ' 0V8') + '"/>';
for (t = 400; t <= 2000; t += 400) s += '<text class="green" text-anchor="middle" x="' + X(t) + '" y="24">' + t + '000 ps</text>';
s += '<text class="green" x="3" y="24">ps</text><path class="cursor" d="M5 0V27"/>';
s += '<rect x="5.500" y="28.500" width="30" height="19" fill="none" stroke="#f0c000"/><text class="gold" x="7" y="43">0 ps</text>';
document.getElementById('ruler').innerHTML = s;
```
